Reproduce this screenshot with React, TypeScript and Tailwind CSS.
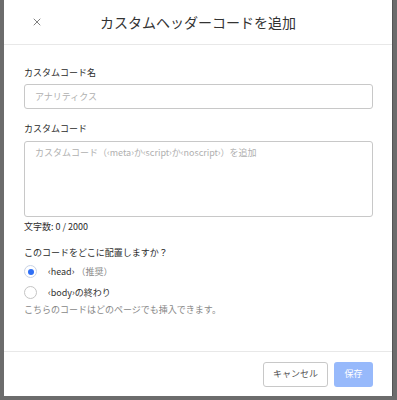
import { X } from "lucide-react";

const font = { fontFamily: '"Noto Sans CJK JP", "Noto Sans", sans-serif' };

const Radio = ({ checked, children }: { checked?: boolean; children: React.ReactNode }) => (
  <div className="flex items-center h-[21px]">
    <div
      className={`h-[13px] w-[13px] rounded-full border flex items-center justify-center bg-white ${
        checked ? "border-[#c9d3e6]" : "border-[#c4c4c4]"
      }`}
    >
      {checked && <div className="h-[6px] w-[6px] rounded-full bg-[#2f6ff5]" />}
    </div>
    <span className="ml-[11px] text-[9px] text-[#333]">{children}</span>
  </div>
);

export default function App() {
  return (
    <div className="w-[397px] h-[400px] bg-[#6c6c6c] overflow-hidden" style={font}>
      <div className="ml-[4px] w-[389px] h-[396px] bg-white flex flex-col border-r border-[#555]">
        {/* header */}
        <div className="h-[45px] border-b border-[#e8e8e8] flex items-center px-[20px] relative">
          <X className="h-[12px] w-[12px] text-[#555] ml-[7px]" strokeWidth={1.5} />
          <span className="absolute left-0 right-0 text-center text-[14px] text-[#333] pointer-events-none">
            カスタムヘッダーコードを追加
          </span>
        </div>

        {/* body */}
        <div className="flex-1 pl-[20px] pr-[19px] pt-[20px] flex flex-col">
          <label className="text-[9px] text-[#2b2b2b] leading-[16px]">カスタムコード名</label>
          <div className="mt-[3px] h-[25px] rounded-[3px] border border-[#c8c8c8] flex items-center px-[10px] text-[9px] text-[#b0b0b0]">
            アナリティクス
          </div>
          <label className="mt-[12px] text-[9px] text-[#2b2b2b] leading-[16px]">カスタムコード</label>
          <div className="mt-[4px] h-[76px] rounded-[3px] border border-[#c8c8c8] px-[10px] pt-[4px] text-[9px] text-[#b0b0b0]">
            カスタムコード（&lsaquo;meta&rsaquo;か&lsaquo;script&rsaquo;か&lsaquo;noscript&rsaquo;）を追加
          </div>
          <div className="mt-[2px] text-[9px] text-[#2b2b2b] leading-[16px]">文字数: 0 / 2000</div>
          <div className="mt-[10px] text-[9px] text-[#2b2b2b] leading-[16px]">このコードをどこに配置しますか？</div>
          <div className="flex flex-col">
            <Radio checked>
              &lsaquo;head&rsaquo; <span className="text-[#888]">（推奨）</span>
            </Radio>
            <Radio>&lsaquo;body&rsaquo;の終わり</Radio>
          </div>
          <div className="-mt-[1px] text-[9px] text-[#888] leading-[16px]">こちらのコードはどのページでも挿入できます。</div>
        </div>

        {/* footer */}
        <div className="h-[45px] border-t border-[#e8e8e8] flex items-center justify-end gap-[6px] pl-[20px] pr-[19px]">
          <button className="h-[25px] w-[65px] rounded-[3px] border border-[#c8c8c8] bg-white text-[9px] text-[#555]">
            キャンセル
          </button>
          <button className="h-[25px] w-[39px] rounded-[3px] bg-[#97b9fb] text-[9px] text-white">保存</button>
        </div>
      </div>
    </div>
  );
}
